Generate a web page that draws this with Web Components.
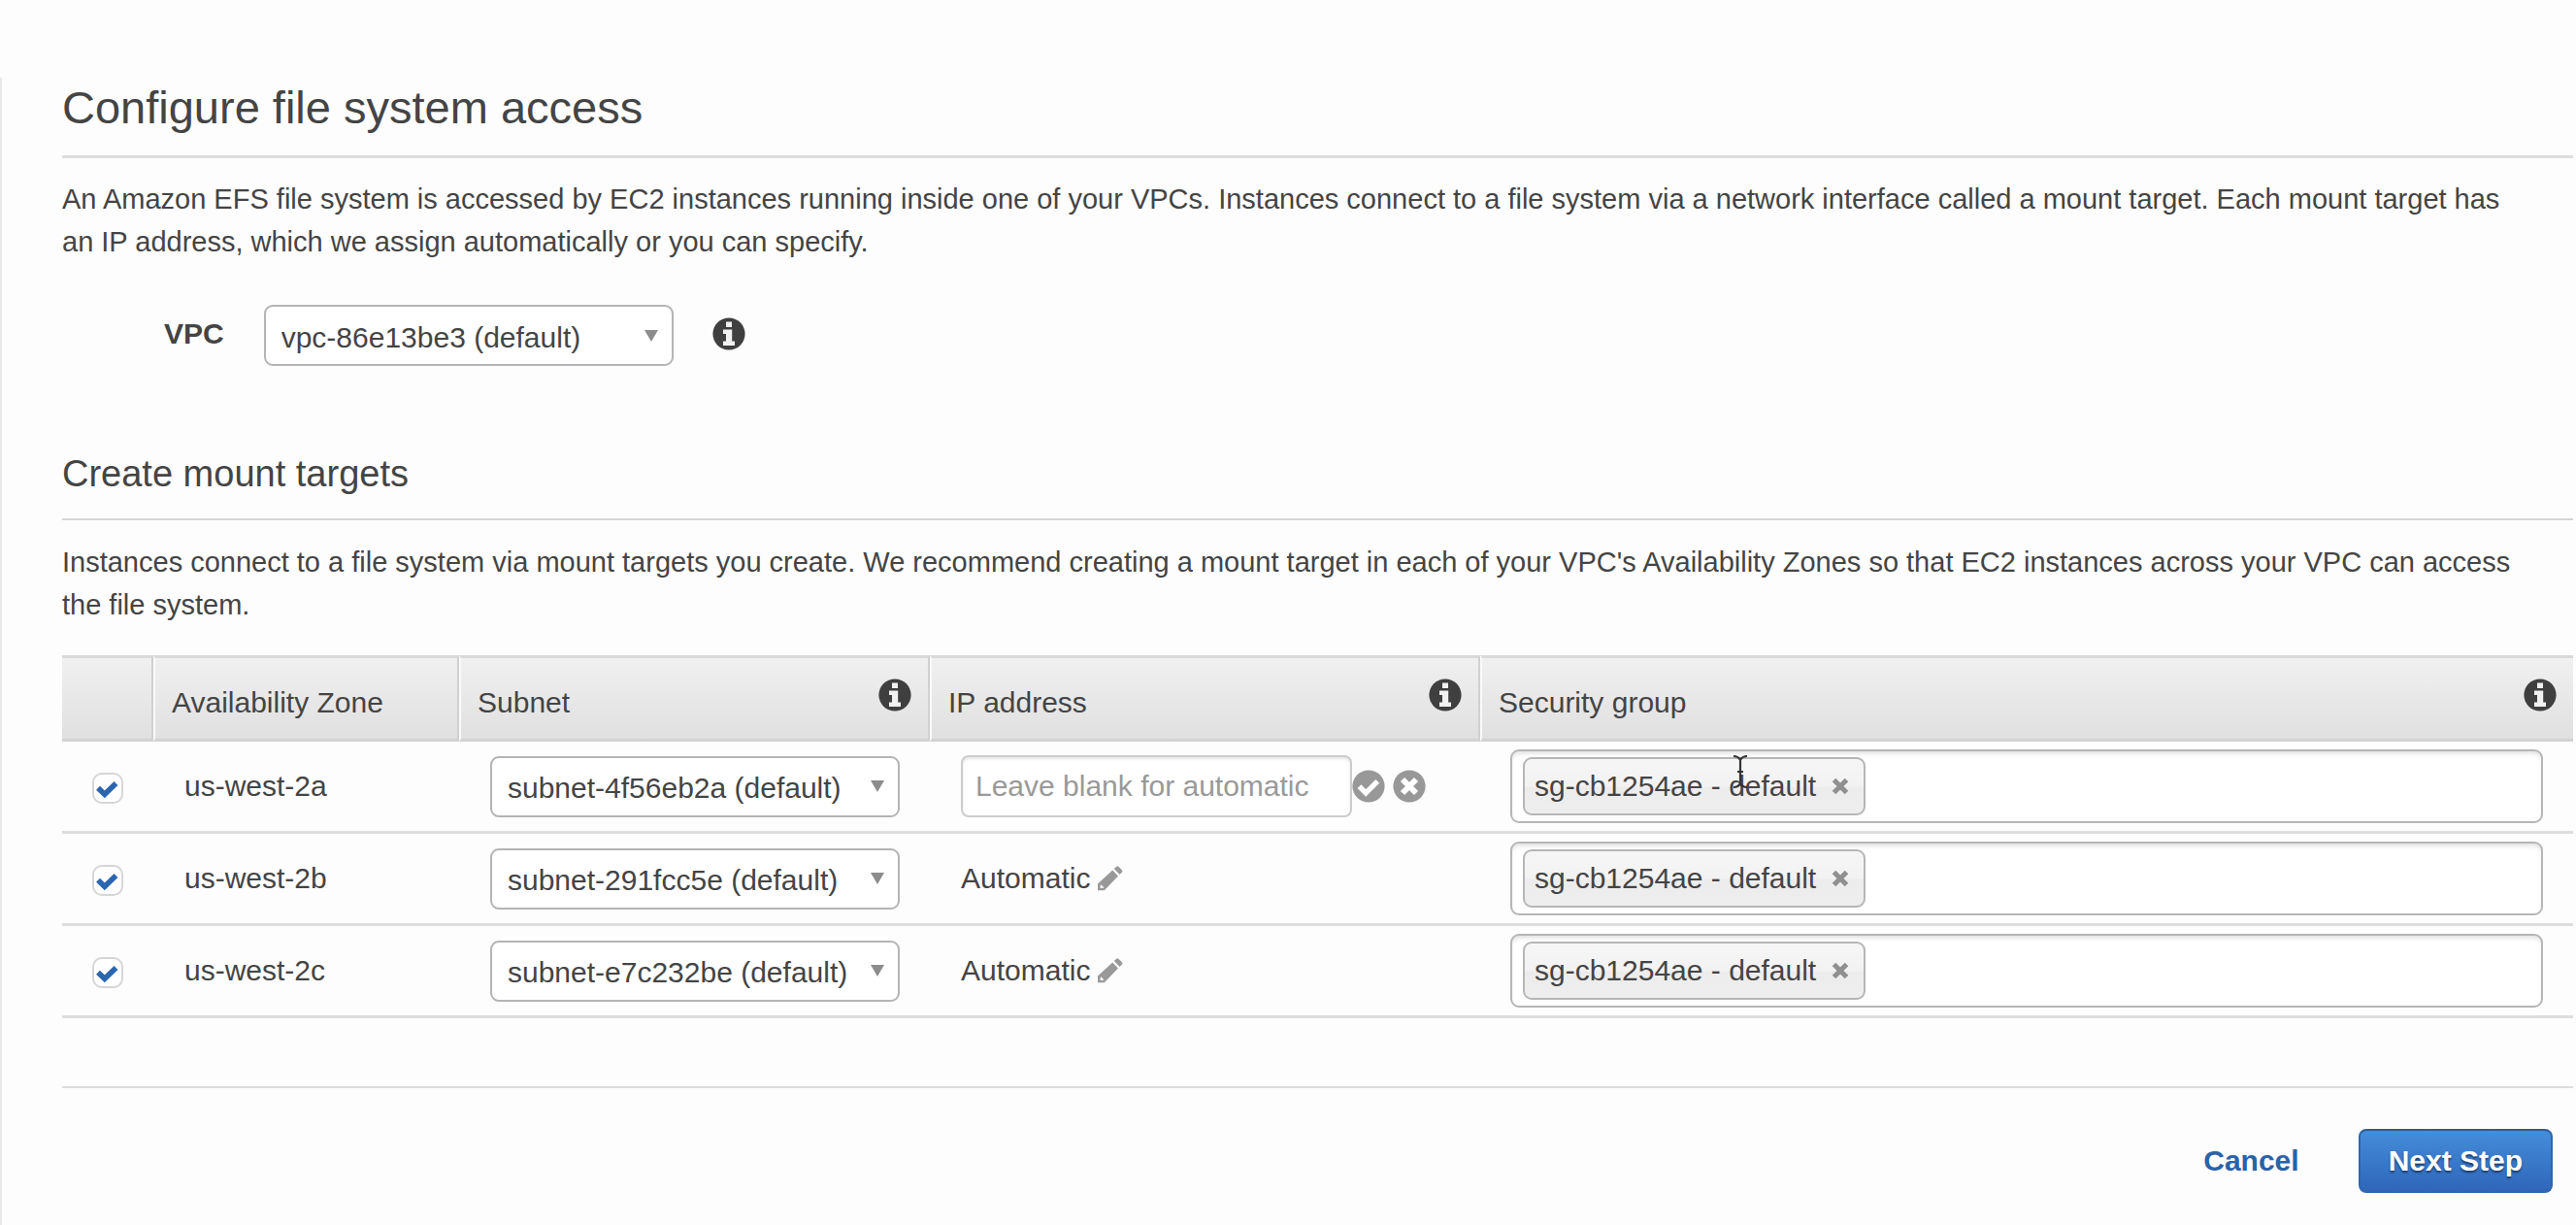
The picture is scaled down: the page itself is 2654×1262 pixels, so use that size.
<!DOCTYPE html>
<html lang="en">
<head>
<meta charset="utf-8">
<title>Configure file system access</title>
<style>
  html { background: #fdfdfd; }
  body {
    margin: 0;
    font-family: "Liberation Sans", Arial, sans-serif;
    font-size: 30px;
    line-height: 44px;
    color: #444;
  }
</style>
</head>
<body>
<efs-wizard-page></efs-wizard-page>

<script>
const define = (name, markup, setup) => {
  const template = document.createElement('template');
  template.innerHTML = '<style>*{box-sizing:border-box}</style>' + markup;
  customElements.define(name, class extends HTMLElement {
    constructor() {
      super();
      this.attachShadow({ mode: 'open' }).append(template.content.cloneNode(true));
    }
    connectedCallback() {
      if (setup) setup(this, this.shadowRoot);
    }
  });
};

define('info-button', `
  <style>
    :host { display: block; flex: none; }
    button { display: block; width: 34px; height: 34px; padding: 0; border: 0; background: none; }
    svg { display: block; width: 34px; height: 34px; }
  </style>
  <button type="button" aria-label="More information">
    <svg viewBox="0 0 34 34"><circle cx="17" cy="17" r="16.6" fill="#3f3f3f"/>
      <path fill="#f1f1f1" d="M14 4.500h6v5.500h-6zM11 12.500H20.200V24.500h2.800V29H11V24.500H14V17h-3z"/></svg>
  </button>`);

define('drop-down', `
  <style>
    :host { display: grid; width: 422px; }
    select, svg { grid-area: 1 / 1; }
    select {
      appearance: none; width: 100%; height: 63px; margin: 0; padding: 4px 40px 0 16px;
      border: 2px solid #b4b4b4; border-radius: 9px; background: #fff;
      font: inherit; color: inherit;
    }
    svg { width: 14px; height: 12px; place-self: center end; margin-right: 16px; pointer-events: none; }
  </style>
  <select><option></option></select>
  <svg viewBox="0 0 14 12"><path fill="#8c8c8c" d="M0 0h14L7 12z"/></svg>`,
  (host, root) => {
    root.querySelector('option').textContent = host.getAttribute('value');
    root.querySelector('select').setAttribute('aria-label', host.getAttribute('label'));
  });

define('check-box', `
  <style>
    :host { display: grid; width: 32px; margin: 4px auto 0 31px; }
    input, svg { grid-area: 1 / 1; width: 32px; height: 32px; }
    input { appearance: none; margin: 0; border: 2px solid #d6d6d6; border-radius: 10px; background: #fff; }
    svg { pointer-events: none; }
    input:not(:checked) + svg { visibility: hidden; }
  </style>
  <input type="checkbox" checked>
  <svg viewBox="0 0 32 32"><path fill="none" stroke="#2a66b0" stroke-width="5.600" d="M6 15.800l6.800 6.500L24.500 11"/></svg>`,
  (host, root) => root.querySelector('input').setAttribute('aria-label', host.getAttribute('label')));

define('ip-editor', `
  <style>
    :host { display: flex; align-items: center; }
    input {
      width: 403px; height: 64px; padding: 0 13px; border: 2px solid #ccc; border-radius: 8px;
      background: #fff; box-shadow: inset 0 2px 3px #e6e6e6; font: inherit; color: inherit;
    }
    input::placeholder { color: #999; opacity: 1; }
    button { padding: 0; border: 0; background: none; margin-right: 8px; }
    svg { display: block; width: 34px; height: 34px; }
  </style>
  <input type="text" placeholder="Leave blank for automatic" aria-label="IP address">
  <button type="button" aria-label="Apply"><svg viewBox="0 0 34 34"><circle cx="17" cy="17" r="16.6" fill="#989898"/>
    <path fill="none" stroke="#fff" stroke-width="5.400" d="M7.500 17.200l6.700 6.700L26.300 11.800"/></svg></button>
  <button type="button" aria-label="Discard"><svg viewBox="0 0 34 34"><circle cx="17" cy="17" r="16.6" fill="#989898"/>
    <path fill="none" stroke="#fff" stroke-width="6" d="M10 10l14 14M24 10L10 24"/></svg></button>`);

define('ip-value', `
  <style>
    :host { display: flex; align-items: center; gap: 8px; }
    button { padding: 0; border: 0; background: none; }
    svg { display: block; width: 26px; height: 26px; }
  </style>
  <slot></slot>
  <button type="button" aria-label="Edit"><svg viewBox="0 0 26 26">
    <path fill="#999" fill-rule="evenodd" d="M15.200 4.600L21 10.400 6.800 25.200H0V18.600zM3.200 19.200L2.600 20.800V23H5L6.400 22.200z"/>
    <path fill="#999" d="M16.800 3L19 .9Q20.300-.3 21.600.9L24.800 4.200Q26 5.500 24.800 6.800L22.600 8.900z"/></svg></button>`);

define('token-field', `
  <style>
    :host {
      display: flex; align-items: center; height: 76px; padding: 0 6px 0 11px;
      border: 2px solid #b6b6b6; border-radius: 9px; background: #fff;
      box-shadow: inset 0 4px 5px -2px #ddd;
    }
    .token {
      display: flex; align-items: center; gap: 16px; height: 60px; padding: 0 15px 0 10px;
      border: 2px solid #b6b6b6; border-radius: 9px;
      background: linear-gradient(#f5f5f5 15%, #f2f2f2 50%, #ececec 52%, #eee);
      white-space: nowrap;
    }
    button { padding: 0; border: 0; background: none; }
    svg { display: block; width: 18px; height: 18px; }
    input { flex: 1; min-width: 0; height: 60px; border: 0; outline: 0; background: none; font: inherit; }
  </style>
  <span class="token"><slot></slot><button type="button" aria-label="Remove">
    <svg viewBox="0 0 18 18"><path stroke="#909090" stroke-width="5" d="M2.500 2.500l13 13M15.500 2.500l-13 13"/></svg></button></span>
  <input type="text" aria-label="Add security group">`);

define('section-title', `
  <style>
    :host { display: block; }
    ::slotted(*) { margin: 0; font-weight: normal; }
    ::slotted(h1) { font-size: 47px; line-height: 56px; padding-bottom: 21px; border-bottom: 3px solid #ddd; }
    ::slotted(h2) { font-size: 38px; line-height: 46px; padding-bottom: 23px; border-bottom: 2px solid #d5d5d5; }
  </style>
  <slot></slot>`);

define('vpc-field', `
  <style>
    :host { display: flex; align-items: center; padding-left: 105px; }
    label { display: flex; align-items: center; gap: 41px; }
    b { padding-bottom: 4px; }
    info-button { margin: 0 0 4px 40px; }
  </style>
  <label><b>VPC</b><drop-down value="vpc-86e13be3 (default)" label="VPC"></drop-down></label>
  <info-button></info-button>`);

define('mount-target-table', `
  <style>
    :host { display: block; }
    table { width: 100%; table-layout: fixed; border-collapse: separate; border-spacing: 0; }
    th {
      height: 89px; padding: 0; text-align: left; font-weight: normal;
      border-top: 3px solid #d9d9d9; border-bottom: 3px solid #d2d2d2;
      background: linear-gradient(#f0f0f0, #e0e0e0);
    }
    th + th { border-left: 2px solid #fafafa; padding-left: 17px; }
    th:not(:last-child) { border-right: 2px solid #d0d0d0; }
    .head { display: flex; justify-content: space-between; align-items: center; padding-right: 17px; }
    .head span { padding-top: 8px; }
    .head info-button { margin-bottom: 8px; }
    td { height: 95px; padding: 0; border-bottom: 3px solid #ddd; }
    td:nth-child(2) { padding-left: 32px; }
    td:nth-child(3), td:nth-child(4) { padding-left: 32px; }
    td:nth-child(5) { padding: 0 31px 0 31px; }
    .c1 { width: 94px; } .c2 { width: 315px; } .c3 { width: 485px; } .c4 { width: 567px; }
  </style>
  <table>
    <colgroup><col class="c1"><col class="c2"><col class="c3"><col class="c4"><col></colgroup>
    <thead><tr>
      <th></th>
      <th scope="col"><div class="head"><span>Availability Zone</span></div></th>
      <th scope="col"><div class="head"><span>Subnet</span><info-button></info-button></div></th>
      <th scope="col"><div class="head"><span>IP address</span><info-button></info-button></div></th>
      <th scope="col"><div class="head"><span>Security group</span><info-button></info-button></div></th>
    </tr></thead>
    <tbody></tbody>
  </table>`,
  (host, root) => {
    const rows = [
      ['us-west-2a', 'subnet-4f56eb2a (default)', true],
      ['us-west-2b', 'subnet-291fcc5e (default)', false],
      ['us-west-2c', 'subnet-e7c232be (default)', false],
    ];
    root.querySelector('tbody').innerHTML = rows.map(([zone, subnet, editing]) => `<tr>
      <td><check-box label="${zone}"></check-box></td>
      <td>${zone}</td>
      <td><drop-down value="${subnet}" label="Subnet for ${zone}"></drop-down></td>
      <td>${editing ? '<ip-editor></ip-editor>' : '<ip-value>Automatic</ip-value>'}</td>
      <td><token-field>sg-cb1254ae - default</token-field></td>
    </tr>`).join('');
  });

define('wizard-footer', `
  <style>
    :host {
      display: flex; justify-content: flex-end; align-items: center; gap: 61px;
      padding: 42px 21px 30px 0; border-top: 2px solid #ddd; font-weight: bold;
    }
    a { color: #2a62a8; text-decoration: none; }
    button {
      height: 66px; padding: 0 29px; border: 2px solid #2f66ad; border-top-color: #2e5c93; border-radius: 8px;
      background: linear-gradient(#448dda, #2f66b9); color: #fff; font: inherit;
      text-shadow: 0 2px 2px #1c3c6a;
    }
  </style>
  <a href="#cancel">Cancel</a>
  <button type="button">Next Step</button>`);

define('text-cursor', `
  <style>
    :host { display: block; position: absolute; left: 1785px; top: 777px; pointer-events: none; }
    svg { display: block; width: 16px; height: 36px; }
  </style>
  <svg viewBox="0 0 16 36"><path fill="none" stroke="#333" stroke-width="2.200" d="M1 2q5 0 7 4q2-4 7-4M8 6v24M5 18h6M1 34q5 0 7-4q2 4 7 4"/></svg>`);

define('efs-wizard-page', `
  <style>
    :host { display: block; padding-top: 80px; }
    main { border-left: 2px solid #e8e8e8; padding: 3px 3px 0 62px; min-height: calc(100vh - 80px); }
    p { margin: 0; padding-right: 51px; font-size: 29px; }
    .intro { margin-top: 20px; }
    vpc-field { margin-top: 43px; }
    .targets { margin-top: 88px; }
    .hint { margin-top: 21px; }
    mount-target-table { margin-top: 30px; }
    wizard-footer { margin-top: 70px; }
  </style>
  <main>
    <section-title><h1>Configure file system access</h1></section-title>
    <p class="intro">An Amazon EFS file system is accessed by EC2 instances running inside one of your VPCs. Instances connect to a file system via a network interface called a mount target. Each mount target has an IP address, which we assign automatically or you can specify.</p>
    <vpc-field></vpc-field>
    <section-title class="targets"><h2>Create mount targets</h2></section-title>
    <p class="hint">Instances connect to a file system via mount targets you create. We recommend creating a mount target in each of your VPC's Availability Zones so that EC2 instances across your VPC can access the file system.</p>
    <mount-target-table></mount-target-table>
    <wizard-footer></wizard-footer>
  </main>
  <text-cursor></text-cursor>`);
</script>
</body>
</html>
